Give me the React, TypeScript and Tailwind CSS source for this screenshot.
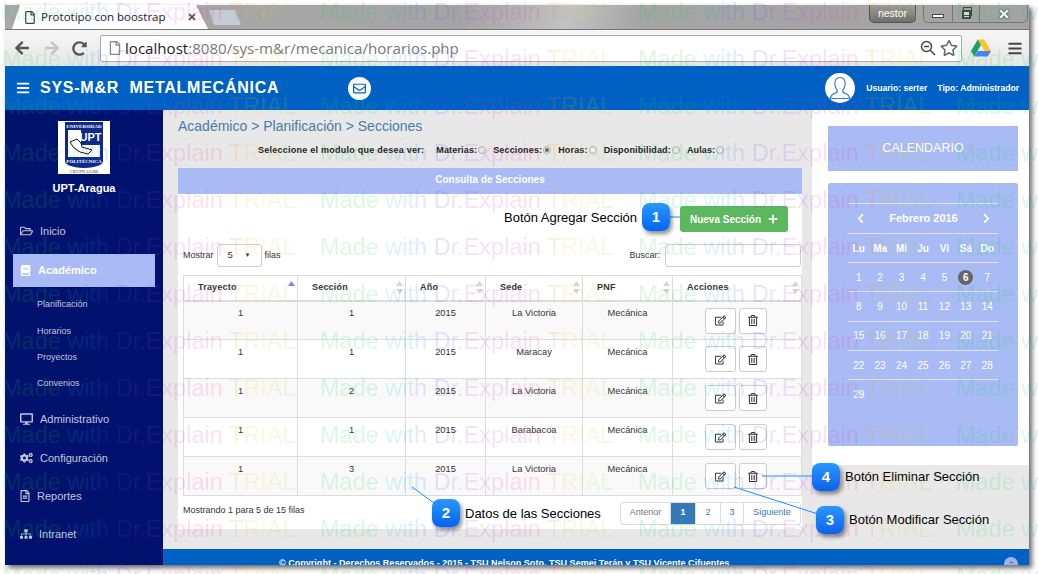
import { FC, JSX, ReactNode } from 'react';
import {
  FaArrowLeft, FaArrowRight, FaBars, FaBook, FaChevronLeft, FaChevronRight, FaCogs, FaDesktop,
  FaPlus, FaRedoAlt, FaRegEdit, FaRegEnvelope, FaRegFile, FaRegFileAlt, FaRegFolderOpen,
  FaRegStar, FaRegTrashAlt, FaSitemap, FaTimes, FaChevronUp,
} from 'react-icons/fa';

const rows = [
  { t: '1', s: '1', sede: 'La Victoria' },
  { t: '1', s: '1', sede: 'Maracay' },
  { t: '1', s: '2', sede: 'La Victoria' },
  { t: '1', s: '1', sede: 'Barabacoa' },
  { t: '1', s: '3', sede: 'La Victoria' },
];

const columns = [
  { name: 'Trayecto', active: true, cls: 'w-[114px]' },
  { name: 'Sección', active: false, cls: 'w-[108px]' },
  { name: 'Año', active: false, cls: 'w-[80px]' },
  { name: 'Sede', active: false, cls: 'w-[97px]' },
  { name: 'PNF', active: false, cls: 'w-[90px]' },
  { name: 'Acciones', active: false, cls: 'w-[129px]' },
];

const modules = [
  { name: 'Materias:', checked: false },
  { name: 'Secciones:', checked: true },
  { name: 'Horas:', checked: false },
  { name: 'Disponibilidad:', checked: false },
  { name: 'Aulas:', checked: false },
];

const weekDays = ['Lu', 'Ma', 'Mi', 'Ju', 'Vi', 'Sá', 'Do'];
const weeks = [
  ['1', '2', '3', '4', '5', '6', '7'],
  ['8', '9', '10', '11', '12', '13', '14'],
  ['15', '16', '17', '18', '19', '20', '21'],
  ['22', '23', '24', '25', '26', '27', '28'],
  ['29', '', '', '', '', '', ''],
];

const SortArrows: FC<{ active: boolean }> = ({ active }) => (
  <svg width="7" height="13" viewBox="0 0 7 13" className="absolute right-[2px] top-[5px]">
    <path d="M3.5 0 L7 5 H0 Z" fill={active ? '#7f86d8' : '#d6d6d6'} />
    {!active && <path d="M3.5 13 L7 8 H0 Z" fill="#d6d6d6" />}
  </svg>
);

const Callout: FC<{ n: string; cls: string }> = ({ n, cls }) => (
  <div className={`absolute flex h-[28px] w-[28px] items-center justify-center rounded-[8px] bg-gradient-to-b from-[#2b96ff] to-[#0066ee] text-[15px] font-bold text-white shadow-[2px_3px_4px_rgba(0,0,0,0.45)] ${cls}`}>
    {n}
  </div>
);

const Label: FC<{ cls: string; children: ReactNode }> = ({ cls, children }) => (
  <div className={`absolute whitespace-nowrap text-[13px] leading-[16px] text-black ${cls}`}>{children}</div>
);

const UptLogo: FC = () => (
  <svg width="52" height="53" viewBox="0 0 52 53" className="block">
    <rect width="52" height="53" fill="#fff" />
    <path d="M7 1 H45 V40 Q45 46 26 47 Q7 46 7 40 Z" fill="#0d2a86" />
    <path d="M10 9 H42 V36 H10 Z" fill="#fff" />
    <path d="M23 9 H42 V24 H23 Z" fill="#0d2a86" />
    <path d="M12 21 L19 18 L23 22 L24 26 L34 29 L30 33 L22 31 L16 27 Z" fill="#fff" stroke="#111" strokeWidth="1" />
    <text x="26" y="7" textAnchor="middle" fontSize="5" fontWeight="700" fill="#fff" fontFamily="Liberation Serif, serif">UNIVERSIDAD</text>
    <text x="32.5" y="20" textAnchor="middle" fontSize="11" fontWeight="700" fill="#fff" fontFamily="Liberation Sans, sans-serif">UPT</text>
    <text x="26" y="42" textAnchor="middle" fontSize="5" fontWeight="700" fill="#fff" fontFamily="Liberation Serif, serif">POLITÉCNICA</text>
    <text x="26" y="52" textAnchor="middle" fontSize="4" fill="#222" fontFamily="Liberation Serif, serif">CIUCPN  AJ1200</text>
  </svg>
);

const DriveIcon: FC = () => (
  <svg width="20" height="18" viewBox="0 0 20 18">
    <path d="M6.8 0.5 H13.2 L20 12 H13.6 Z" fill="#f7c52b" />
    <path d="M6.8 0.5 L0 12 L3.2 17.5 L10 6 Z" fill="#1aa260" />
    <path d="M3.2 17.5 H16.8 L20 12 H6.6 Z" fill="#4b84f0" />
  </svg>
);

const AvatarIcon: FC = () => (
  <svg width="22" height="24" viewBox="0 0 22 24" fill="none" stroke="#2f7fd0" strokeWidth="1.2">
    <path d="M11 1.5 C7 1.5 5.6 4.6 5.8 8 C6 11.5 7.8 14 8.4 15 C8.6 16.6 7 17 4.5 18 C2.5 18.8 1.5 19.6 1.5 22.5 H20.5 C20.5 19.6 19.5 18.8 17.5 18 C15 17 13.4 16.6 13.6 15 C14.2 14 16 11.5 16.2 8 C16.4 4.6 15 1.5 11 1.5 Z" />
  </svg>
);

const Watermark: FC = () => (
  <div className="pointer-events-none absolute inset-0 z-40 overflow-hidden opacity-[0.14]">
    {Array.from({ length: 13 }).map((_, r) => (
      <div key={r} className="flex h-[47px] pl-[2px] first:-mt-[1px]">
        {Array.from({ length: 4 }).map((_, c) => (
          <span
            key={c}
            className="w-[318px] shrink-0 whitespace-nowrap text-[23.5px] leading-[27px]"
          >
            <span className="text-[#10d050]">Made</span>{' '}
            <span className="bg-gradient-to-r from-[#10c8c0] to-[#3050ff] bg-clip-text text-transparent">with</span>{' '}
            <span className="bg-gradient-to-r from-[#5030ff] via-[#d020e0] to-[#ff2070] bg-clip-text text-transparent">Dr.Explain</span>{' '}
            <span className="bg-gradient-to-r from-[#ff7010] via-[#f0e000] to-[#40e040] bg-clip-text text-transparent">TRIAL</span>
          </span>
        ))}
      </div>
    ))}
  </div>
);

const BrowserChrome: FC = () => (
  <>
    <div className="flex h-[24px] items-end justify-between bg-[linear-gradient(100deg,#a9a9a9_0%,#a4a4a4_45%,#c2c2c2_55%,#a5a5a5_62%,#a3a3a3_100%)] pr-[1px]">
      <div className="flex items-end">
        <div className="ml-[7px] flex h-[24px] w-[196px] items-center bg-white pl-[13px] pr-[11px] text-[11.5px] text-[#222] [clip-path:polygon(0_100%,8px_0,184px_0,196px_100%)] font-['Open_Sans',sans-serif]">
          <FaRegFile className="mr-[6px] h-[13px] w-[10px] shrink-0 text-[#444]" />
          <span className="flex-1 whitespace-nowrap">Prototipo con boostrap</span>
          <FaTimes className="h-[10px] w-[10px] text-[#555]" />
        </div>
        <div className="mb-[4px] ml-[1px] h-[15px] w-[32px] rounded-[2px] bg-[#c4ccd8] [clip-path:polygon(0_0,26px_0,32px_100%,5px_100%)]" />
      </div>
      <div className="flex h-[24px] items-start">
        <div className="mr-[7px] flex h-[18px] w-[47px] items-center justify-center rounded-b-[5px] border border-t-0 border-[#555] bg-gradient-to-b from-[#9b9b9b] to-[#6f6f6f] text-[10.5px] text-white">
          nestor
        </div>
        <div className="flex h-[18px] w-[105px] divide-x divide-[#777] rounded-b-[5px] border border-t-0 border-[#777]">
          <div className="flex w-[29px] items-center justify-center">
            <div className="mt-[4px] h-[4px] w-[12px] border border-[#444] bg-white" />
          </div>
          <div className="relative flex w-[27px] items-center justify-center">
            <div className="absolute left-[10px] top-[2px] h-[9px] w-[9px] border border-[#444]" />
            <div className="mt-[2px] h-[9px] w-[9px] border-2 border-[#444] bg-[#ddd]" />
          </div>
          <div className="flex flex-1 items-center justify-center">
            <FaTimes className="h-[12px] w-[12px] text-white drop-shadow-[0_0_1px_#222]" />
          </div>
        </div>
      </div>
    </div>
    <div className="flex h-[37px] items-center border-t border-[#777] bg-gradient-to-b from-[#f6f6f6] to-[#e6e6e6]">
      <div className="flex w-[95px] items-center pl-[9px]">
        <FaArrowLeft className="h-[16px] w-[16px] text-[#555]" />
        <FaArrowRight className="ml-[14px] h-[16px] w-[16px] text-[#c4c4c4]" />
        <FaRedoAlt className="ml-[12px] h-[15px] w-[15px] text-[#555]" />
      </div>
      <div className="flex h-[27px] w-[862px] items-center rounded-[2px] border border-[#aaa] bg-white pl-[8px] pr-[3px] font-['Open_Sans',sans-serif]">
        <FaRegFile className="mr-[4px] h-[14px] w-[12px] text-[#888]" />
        <span className="flex-1 whitespace-nowrap text-[15.1px] leading-[20px] text-[#777]">
          <span className="text-[#222]">localhost</span>:8080/sys-m&amp;r/mecanica/horarios.php
        </span>
        <svg width="16" height="16" viewBox="0 0 16 16" fill="none" stroke="#444" strokeWidth="1.5" className="mr-[4px]">
          <circle cx="6.5" cy="6.5" r="5" />
          <path d="M4 6.5 H9 M10.5 10.5 L15 15" />
        </svg>
        <FaRegStar className="h-[18px] w-[18px] text-[#666]" />
      </div>
      <div className="ml-[9px]"><DriveIcon /></div>
      <FaBars className="ml-[17px] h-[15px] w-[14px] text-[#444]" />
    </div>
  </>
);

const TopBar: FC = () => (
  <div className="flex h-[44px] items-center bg-[#0061c4] text-white">
    <FaBars className="ml-[11px] h-[14px] w-[14px]" />
    <div className="ml-[10px] w-[308px] whitespace-nowrap text-[16px] font-bold tracking-[0.75px]">
      SYS-M&amp;R&nbsp;&nbsp;METALMECÁNICA
    </div>
    <div className="flex h-[23px] w-[23px] items-center justify-center rounded-full bg-white">
      <FaRegEnvelope className="h-[13px] w-[13px] text-[#0061c4]" />
    </div>
    <div className="ml-auto flex h-[30px] w-[30px] items-center justify-center rounded-full bg-white">
      <AvatarIcon />
    </div>
    <div className="ml-[11px] mr-[10px] whitespace-nowrap text-[8.6px] font-bold">
      Usuario: serter<span className="ml-[10px]">Tipo: Administrador</span>
    </div>
  </div>
);

const Sidebar: FC = () => (
  <aside className="w-[158px] shrink-0 bg-[#00126e] text-[11px] text-[#c3c7dd]">
    <div className="flex flex-col items-center pt-[11px]">
      <UptLogo />
      <div className="mt-[8px] text-[11px] font-bold leading-[13px] text-white">UPT-Aragua</div>
    </div>
    <div className="mt-[26px] flex h-[20px] items-center pl-[15px]">
      <FaRegFolderOpen className="h-[12px] w-[13px]" />
      <span className="ml-[7px]">Inicio</span>
    </div>
    <div className="ml-[8px] mt-[13px] flex h-[33px] w-[142px] items-center bg-[#a9bbf5] pl-[7px] font-bold text-white">
      <FaBook className="h-[11px] w-[11px]" />
      <span className="ml-[7px]">Académico</span>
    </div>
    <div className="pl-[32px] text-[9px] leading-[12px]">
      <div className="mt-[11px]">Planificación</div>
      <div className="mt-[15px]">Horarios</div>
      <div className="mt-[14px]">Proyectos</div>
      <div className="mt-[14px]">Convenios</div>
    </div>
    <div className="mt-[20px] flex h-[20px] items-center pl-[15px]">
      <FaDesktop className="h-[12px] w-[13px]" />
      <span className="ml-[7px]">Administrativo</span>
    </div>
    <div className="mt-[19px] flex h-[20px] items-center pl-[15px]">
      <FaCogs className="h-[12px] w-[13px]" />
      <span className="ml-[7px]">Configuración</span>
    </div>
    <div className="mt-[18px] flex h-[20px] items-center pl-[15px]">
      <FaRegFileAlt className="h-[12px] w-[10px]" />
      <span className="ml-[7px]">Reportes</span>
    </div>
    <div className="mt-[18px] flex h-[20px] items-center pl-[15px]">
      <FaSitemap className="h-[12px] w-[12px]" />
      <span className="ml-[7px]">Intranet</span>
    </div>
  </aside>
);

const SectionsTable: FC = () => (
  <table className="w-[618px] table-fixed border-collapse text-[9.3px] text-[#333]">
    <thead>
      <tr className="h-[25px]">
        {columns.map((col) => (
          <th key={col.name} className={`${col.cls} relative border border-b-2 border-[#ddd] pl-[14px] text-left text-[9px] font-bold tracking-[0.2px]`}>
            {col.name}
            <SortArrows active={col.active} />
          </th>
        ))}
      </tr>
    </thead>
    <tbody>
      {rows.map((row, i) => (
        <tr key={i} className={`h-[39px] ${i % 2 === 0 ? 'bg-[#f9f9f9]' : 'bg-white'}`}>
          <td className="border border-[#ddd] pb-[13px] text-center align-middle">{row.t}</td>
          <td className="border border-[#ddd] pb-[13px] text-center align-middle">{row.s}</td>
          <td className="border border-[#ddd] pb-[13px] text-center align-middle">2015</td>
          <td className="border border-[#ddd] pb-[13px] text-center align-middle">{row.sede}</td>
          <td className="border border-[#ddd] pb-[13px] text-center align-middle">Mecánica</td>
          <td className="border border-[#ddd] align-top">
            <div className="mt-[6px] flex justify-end gap-[3px] pr-[34px]">
              <button className="flex h-[26px] w-[31px] items-center justify-center rounded-[3px] border border-[#ccc] bg-white text-[#333]">
                <FaRegEdit className="h-[11px] w-[11px]" />
              </button>
              <button className="flex h-[26px] w-[28px] items-center justify-center rounded-[3px] border border-[#ccc] bg-white text-[#333]">
                <FaRegTrashAlt className="h-[11px] w-[10px]" />
              </button>
            </div>
          </td>
        </tr>
      ))}
    </tbody>
  </table>
);

const SectionsPanel: FC = () => (
  <section className="w-[624px] bg-white">
    <div className="flex h-[26px] items-center justify-center bg-[#a9bbf5] pb-[3px] text-[10px] font-bold text-white">
      Consulta de Secciones
    </div>
    <div className="flex justify-end pr-[14px] pt-[12px]">
      <button className="flex h-[26px] w-[108px] items-center justify-center rounded-[3px] bg-[#5cb85c] text-[10px] font-bold text-white">
        Nueva Sección
        <FaPlus className="ml-[7px] h-[10px] w-[10px]" />
      </button>
    </div>
    <div className="mt-[12px] flex h-[23px] items-center pl-[5px] pr-[1px] text-[9px] text-[#333]">
      <span>Mostrar</span>
      <div className="ml-[3px] flex h-[23px] w-[45px] items-center justify-between rounded-[3px] border border-[#ccc] px-[10px] text-[9.5px]">
        <span>5</span>
        <span className="text-[6px]">▼</span>
      </div>
      <span className="ml-[3px]">filas</span>
      <span className="ml-auto">Buscar:</span>
      <div className="ml-[5px] h-[23px] w-[136px] rounded-[3px] border border-[#ccc]" />
    </div>
    <div className="ml-[5px] mt-[8px]">
      <SectionsTable />
    </div>
    <div className="flex h-[33px] items-center justify-between pl-[5px] pr-[1px] pt-[1px] text-[9px] text-[#333]">
      <span className="mb-[4px]">Mostrando 1 para 5 de 15 filas</span>
      <div className="flex h-[23px] divide-x divide-[#ddd] rounded-[3px] border border-[#ddd] text-[9px] text-[#337ab7]">
        <div className="flex w-[50px] items-center justify-center text-[#777]">Anterior</div>
        <div className="flex w-[25px] items-center justify-center bg-[#337ab7] font-bold text-white">1</div>
        <div className="flex w-[25px] items-center justify-center">2</div>
        <div className="flex w-[23px] items-center justify-center">3</div>
        <div className="flex w-[56px] items-center justify-center">Siguiente</div>
      </div>
    </div>
  </section>
);

const CalendarPanel: FC = () => (
  <div className="flex-1 bg-white pl-[16px] pr-[11px] pt-[16px]">
    <div className="flex h-[45px] items-center justify-center bg-[#a9bbf5] text-[12.5px] text-white">CALENDARIO</div>
    <div className="mt-[12px] h-[263px] rounded-[2px] bg-[#a9bbf5] px-[20px] pt-[20px] text-[10px] font-bold text-white">
      <div className="flex h-[30px] items-center justify-between border-t border-[#dbe2fa] pl-[8px] pr-[7px]">
        <FaChevronLeft className="h-[11px] w-[9px]" />
        <span className="text-[11px]">Febrero 2016</span>
        <FaChevronRight className="h-[11px] w-[9px]" />
      </div>
      <div className="grid h-[29px] grid-cols-7 items-center border-t border-[#dbe2fa] text-center">
        {weekDays.map((d) => <span key={d}>{d}</span>)}
      </div>
      {weeks.map((week, w) => (
        <div key={w} className="grid h-[29.3px] grid-cols-7 items-center border-t border-[#dbe2fa] text-center font-normal">
          {week.map((d, i) => (
            <span key={i} className="flex justify-center">
              {d === '6' ? (
                <span className="flex h-[15px] w-[15px] items-center justify-center rounded-full bg-[#666] font-bold">6</span>
              ) : d}
            </span>
          ))}
        </div>
      ))}
    </div>
  </div>
);

const Annotations: FC = () => (
  <>
    <svg width="1038" height="574" className="pointer-events-none absolute left-0 top-0 z-20" fill="none" stroke="#1e8cff" strokeWidth="1">
      <path d="M668 217 H681" />
      <path d="M412 487 L434 503" />
      <path d="M734 487 L818 514" />
      <path d="M762 476 H814" />
    </svg>
    <Callout n="1" cls="left-[642px] top-[203px] z-30" />
    <Callout n="2" cls="left-[432px] top-[499px] z-30" />
    <Callout n="3" cls="left-[816px] top-[506px] z-30" />
    <Callout n="4" cls="left-[812px] top-[463px] z-30" />
    <Label cls="left-[504px] top-[210px] z-30">Botón Agregar Sección</Label>
    <Label cls="left-[465px] top-[506px] z-30">Datos de las Secciones</Label>
    <Label cls="left-[849px] top-[512px] z-30">Botón Modificar Sección</Label>
    <Label cls="left-[845px] top-[469px] z-30">Botón Eliminar Sección</Label>
  </>
);

const App: FC = (): JSX.Element => (
  <div className="relative h-[574px] w-[1038px] overflow-hidden bg-white font-['Liberation_Sans',Arial,sans-serif]">
    <div className="ml-[5px] mt-[5px] flex h-[560px] w-[1024px] flex-col overflow-hidden shadow-[3px_3px_5px_rgba(0,0,0,0.6)]">
      <BrowserChrome />
      <TopBar />
      <div className="flex flex-1 overflow-hidden">
        <Sidebar />
        <div className="flex flex-1 flex-col bg-[#e8e8e8]">
          <div className="flex flex-1">
            <div className="w-[649px] pl-[15px]">
              <div className="mt-[8px] text-[14px] leading-[17px] text-[#4a7ba6]">Académico &gt; Planificación &gt; Secciones</div>
              <div className="mt-[9px] flex h-[14px] items-center pl-[80px] text-[9px] font-bold text-[#222]">
                <span className="mr-[12px] tracking-[0.25px]">Seleccione el modulo que desea ver:</span>
                {modules.map((m) => (
                  <span key={m.name} className="mr-[7px] flex items-center tracking-[0.15px]">
                    {m.name}
                    <span className="-mt-[3px] ml-[1px] flex h-[8px] w-[8px] items-center justify-center rounded-full border border-[#aaa] bg-[#eee]">
                      {m.checked && <span className="h-[4px] w-[4px] rounded-full bg-[#666]" />}
                    </span>
                  </span>
                ))}
              </div>
              <div className="mt-[10px]">
                <SectionsPanel />
              </div>
            </div>
            <div className="flex h-[355px] flex-1 flex-col">
              <CalendarPanel />
            </div>
          </div>
          <footer className="relative h-[16px] overflow-hidden bg-[#0061c4] pl-[116px] pt-[9px] text-[9px] font-bold leading-[11px] tracking-[0.03px] text-white">
            © Copyright - Derechos Reservados - 2015 - TSU Nelson Soto, TSU Semei Terán y TSU Vicente Cifuentes
            <span className="absolute left-[841px] top-[8px] flex h-[14px] w-[14px] items-start justify-center rounded-full bg-[#9fb4ea] pt-[3px] text-[#466]">
              <FaChevronUp className="h-[5px] w-[5px]" />
            </span>
          </footer>
        </div>
      </div>
    </div>
    <Annotations />
    <Watermark />
  </div>
);

export default App;
